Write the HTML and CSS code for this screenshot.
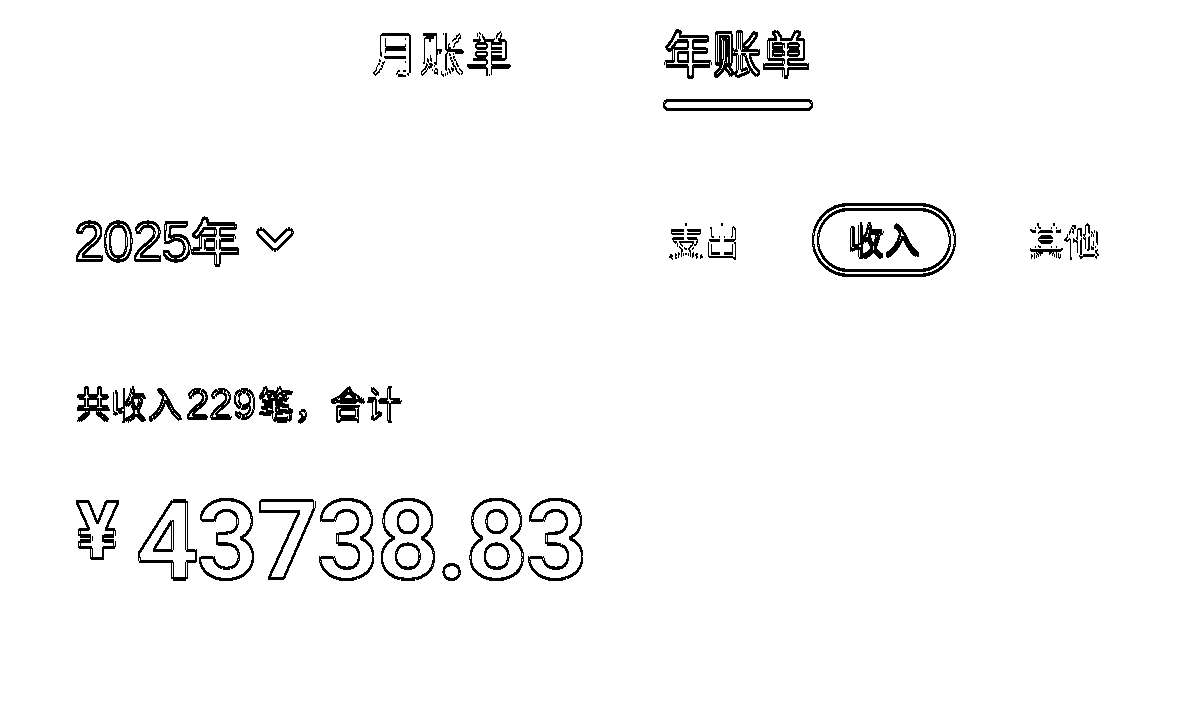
FILE: index.html
```html
<!DOCTYPE html>
<html lang="zh-CN">
<head>
    <meta charset="UTF-8">
    <meta name="viewport" content="width=device-width, initial-scale=1.0">
    <title>年账单</title>
    <link rel="stylesheet" href="styles.css">
</head>
<body>
    <!-- the reference is an edge map, so the page is drawn black on white and run through this filter -->
    <svg class="filter-defs" width="0" height="0">
        <filter id="edges" x="0" y="0" width="100%" height="100%" color-interpolation-filters="sRGB">
            <feConvolveMatrix in="SourceGraphic" order="3" divisor="8" kernelMatrix="-1 -1 -1 -1 8 -1 -1 -1 -1" preserveAlpha="true"/>
            <feComponentTransfer result="outer">
                <feFuncR type="discrete" tableValues="1 0 0 0 0 0 0 0"/>
                <feFuncG type="discrete" tableValues="1 0 0 0 0 0 0 0"/>
                <feFuncB type="discrete" tableValues="1 0 0 0 0 0 0 0"/>
            </feComponentTransfer>
            <feConvolveMatrix in="SourceGraphic" order="3" divisor="8" kernelMatrix="1 1 1 1 -8 1 1 1 1" preserveAlpha="true"/>
            <feComponentTransfer result="inner">
                <feFuncR type="discrete" tableValues="1 0 0 0 0 0 0 0"/>
                <feFuncG type="discrete" tableValues="1 0 0 0 0 0 0 0"/>
                <feFuncB type="discrete" tableValues="1 0 0 0 0 0 0 0"/>
            </feComponentTransfer>
            <feBlend in="outer" in2="inner" mode="multiply" result="lines"/>
            <!-- bottom edges are heavier in the reference -->
            <feOffset in="lines" dy="1" result="shifted"/>
            <feFlood flood-color="#fff" result="paper"/>
            <feMerge result="shiftedOnPaper">
                <feMergeNode in="paper"/>
                <feMergeNode in="shifted"/>
            </feMerge>
            <feBlend in="lines" in2="shiftedOnPaper" mode="multiply"/>
        </filter>
    </svg>

    <div id="page">
        <div class="tabs">
            <div class="tab">月账单</div>
            <div class="tab active">年账单</div>
        </div>

        <div class="filter-row">
            <div class="year">
                <span class="year-text"><span class="year-num">2025</span>年</span>
                <svg class="chevron" width="36" height="24" viewBox="0 0 36 24">
                    <path d="M4 5 L18 19 L32 5" fill="none" stroke="#000" stroke-width="7" stroke-linecap="round" stroke-linejoin="round"/>
                </svg>
            </div>
            <div class="types">
                <div class="type">支出</div>
                <div class="type selected">收入</div>
                <div class="type">其他</div>
            </div>
        </div>

        <div class="summary">共收入<span class="count">229</span>笔，合计</div>

        <div class="amount">
            <span class="currency">¥</span>
            <span class="value">43738.83</span>
        </div>
    </div>
</body>
</html>
```

FILE: styles.css
```css
body {
    margin: 0;
    background-color: white;
    color: black;
    font-family: "Noto Sans CJK SC", "Liberation Sans", sans-serif;
}
.filter-defs {
    display: block;
    height: 0;
}
#page {
    height: 706px;
    overflow: hidden;
    background-color: white;
    filter: url(#edges);
}
.tabs {
    display: flex;
    justify-content: center;
    gap: 151px;
    height: 109px;
    padding-left: 4px;
}
.tab {
    font-size: 47px;
    line-height: 66px;
    padding-top: 18px;
    color: #888;
}
.tab.active {
    font-size: 49px;
    font-weight: 500;
    color: black;
    width: 148px;
    height: 91px;
    position: relative;
}
.tab.active::after {
    content: "";
    position: absolute;
    left: 0;
    right: 0;
    bottom: 0;
    height: 9px;
    border-radius: 5px;
    background-color: black;
}
.filter-row {
    display: flex;
    justify-content: space-between;
    align-items: center;
    height: 71px;
    margin-top: 95px;
    padding: 0 79px 0 74px;
}
.year {
    display: flex;
    align-items: center;
    gap: 17px;
    font-size: 50px;
    font-weight: 500;
    margin-bottom: 4px;
}
.year-num {
    font-family: "Liberation Sans", sans-serif;
    font-size: 55px;
    letter-spacing: -1.5px;
}
.chevron {
    margin-top: 2px;
}
.types {
    display: flex;
    align-items: center;
    gap: 40px;
}
.type {
    font-size: 36px;
    color: #888;
    padding: 0 33px;
    height: 71px;
    line-height: 71px;
    box-sizing: border-box;
}
.type:first-child {
    padding-left: 0;
}
.type:last-child {
    padding-right: 0;
}
.type.selected {
    color: black;
    border: 5px solid black;
    border-radius: 36px;
    line-height: 59px;
    padding: 0 30px;
}
.summary {
    margin-top: 102px;
    font-size: 36px;
    line-height: 50px;
    padding-left: 75px;
    color: #444;
}
.count {
    font-family: "Liberation Sans", sans-serif;
    font-size: 42px;
    margin: 0 2px 0 3px;
}
.amount {
    display: flex;
    align-items: flex-start;
    gap: 17px;
    margin-top: 62px;
    padding-left: 76px;
}
.currency {
    font-family: "Roboto", sans-serif;
    font-size: 80px;
    font-weight: 700;
    line-height: 80px;
}
.value {
    font-family: "Roboto", sans-serif;
    font-size: 110px;
    font-weight: 600;
    line-height: 100px;
    letter-spacing: -2.7px;
}
```
